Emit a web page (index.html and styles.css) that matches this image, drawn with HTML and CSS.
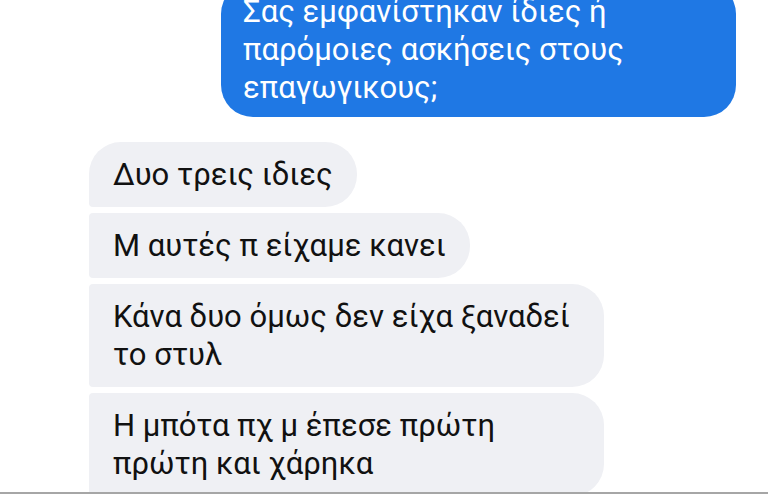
FILE: index.html
```html
<!DOCTYPE html>
<html lang="el">
<head>
  <meta charset="UTF-8" />
  <meta name="viewport" content="width=device-width, initial-scale=1.0"/>
  <title>Συνομιλία</title>
  <link rel="stylesheet" href="styles.css">
</head>
<body>
  <div class="screen">
    <div class="chat">
      <div class="bubble sent">Σας εμφανίστηκαν ίδιες ή παρόμοιες ασκήσεις στους επαγωγικους;</div>

      <div class="group">
        <div class="bubble received first">Δυο τρεις ιδιες</div>
        <div class="bubble received">Μ αυτές π είχαμε κανει</div>
        <div class="bubble received">Κάνα δυο όμως δεν είχα ξαναδεί το στυλ</div>
        <div class="bubble received">Η μπότα πχ μ έπεσε πρώτη πρώτη και χάρηκα</div>
      </div>
    </div>
    <div class="bottom-line"></div>
  </div>
</body>
</html>
```

FILE: styles.css
```css
* {
  margin: 0;
  padding: 0;
  box-sizing: border-box;
}

html, body {
  width: 100%;
  height: 100%;
  overflow: hidden;
  background-color: #ffffff;
  font-family: Roboto, 'Noto Sans', sans-serif;
}

.screen {
  height: 494px;
  display: flex;
  flex-direction: column;
}

.chat {
  flex: 1;
  overflow: hidden;
  display: flex;
  flex-direction: column;
  gap: 25px;
  margin-top: -18px;
}

.group {
  display: flex;
  flex-direction: column;
  align-items: flex-start;
  gap: 6px;
  padding-left: 89px;
}

.bubble {
  font-size: 31px;
  line-height: 38px;
  max-width: 515px;
  width: fit-content;
}

.sent {
  align-self: flex-end;
  margin-right: 32px;
  background: #1f78e4;
  color: #ffffff;
  padding: 11px 22px 10px;
  border-radius: 32px;
  width: 515px;
}

.received {
  background: #eff0f4;
  color: #111111;
  padding: 14px 24px 13px;
  border-radius: 4px 32px 32px 4px;
}

.received.first {
  border-top-left-radius: 32px;
}

.bottom-line {
  height: 2px;
  background: #a6a6a6;
}
```
